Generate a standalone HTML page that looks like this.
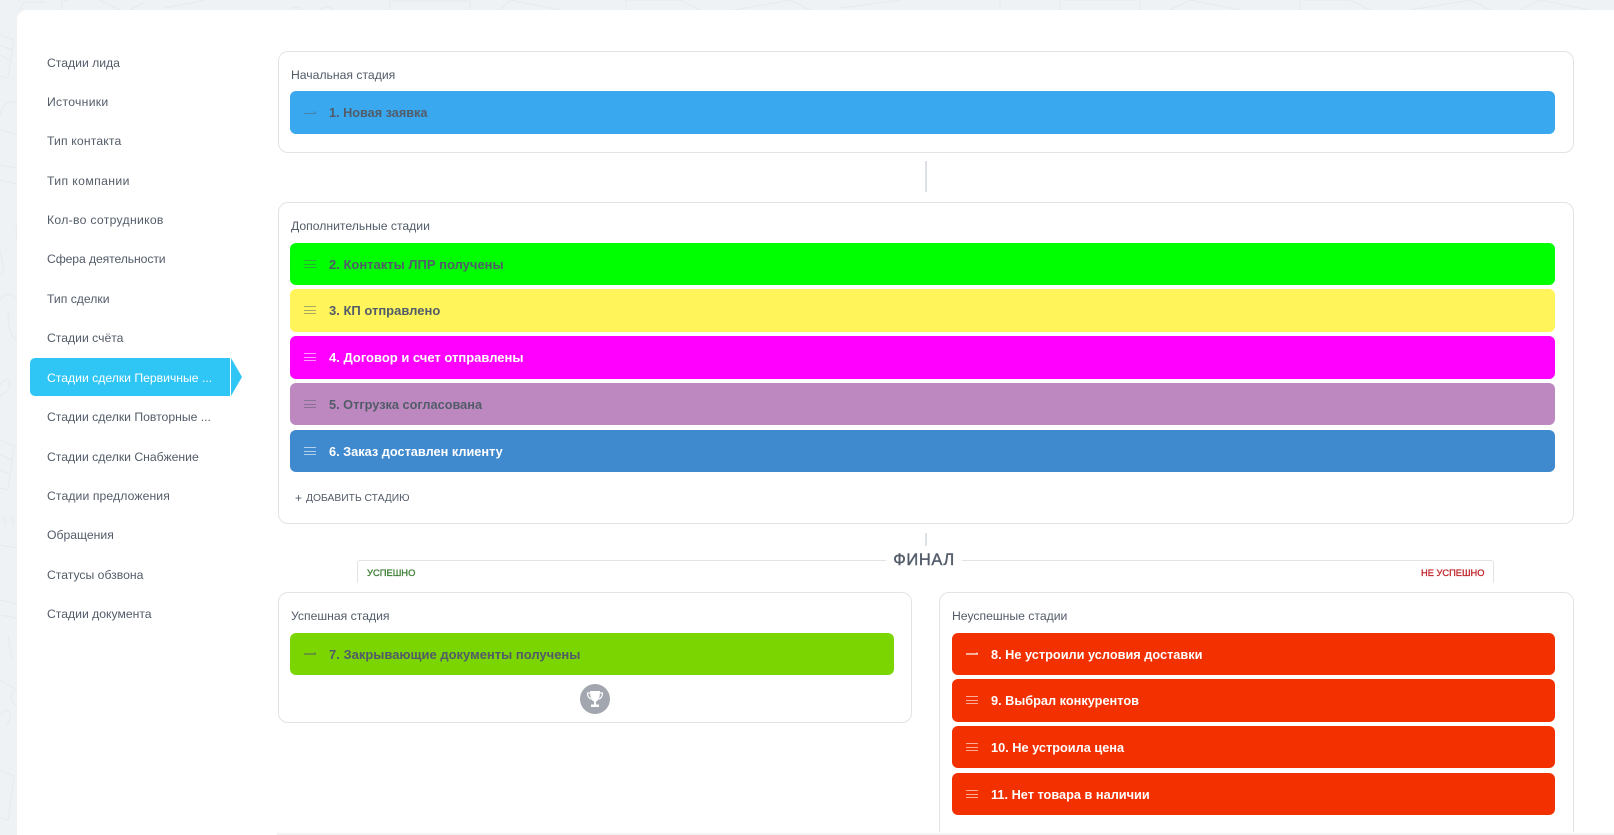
<!DOCTYPE html>
<html lang="ru">
<head>
<meta charset="utf-8">
<title>Стадии</title>
<style>
html,body{margin:0;padding:0;width:1614px;height:835px;overflow:hidden;background:#eef2f4;font-family:"Liberation Sans",sans-serif;color:#535c69}
#wrap{position:relative;width:1614px;height:835px;overflow:hidden;background:#eef2f4}
#bg{position:absolute;left:0;top:0}
#panel{position:absolute;left:17px;top:10px;width:1597px;height:825px;background:#fff;border-radius:10px 0 0 0}
.abs,.nav,.card,.st,.lbl,.conn{position:absolute}
.nav{left:47px;font-size:12.2px;line-height:16px;white-space:nowrap;color:#535c69}
.card{box-sizing:border-box;border:1px solid #e2e3e5;border-radius:10px;background:#fff}
.lbl{font-size:12.2px;line-height:16px;white-space:nowrap;color:#535c69}
.st{border-radius:6px;height:42px}
.st span{position:absolute;left:39px;top:0;line-height:43px;font-size:13px;font-weight:700;white-space:nowrap;color:#525c69}
.st.w span{color:#fff}
.st.r span{font-size:12.75px}
.st svg{position:absolute;left:14px;top:16px}
.conn{width:2px;background:#dde0e4;left:925px}
</style>
</head>
<body>
<div id="wrap">
<svg id="bg" width="1614" height="835" fill="none" stroke="#e6eaed" stroke-width="1">
<path d="M20 10L24 2H45M62 10V1L90 -4L120 10M130 10L145 2M165 8L205 0M290 10C292 6 300 6 302 10M320 10C322 6 330 6 333 10M390 10V1H470V10M500 10L510 0L560 10M626 10V0H680L700 10M735 10L790 0L810 10M840 8L900 0M1000 10V0M1060 10V0H1140V10M1170 10L1190 0L1240 10M1300 10V0H1350L1370 10M1410 10L1470 0L1490 10M1520 10L1540 0L1590 10"/>
<path d="M0 35L14 40L8 78L0 76M0 45L12 50M0 55L10 60M0 115C4 100 14 100 17 104M0 130L17 135M0 165L17 168M0 180L17 184M0 250L4 270L0 275M16 225L17 240M0 300C6 290 14 296 17 300M8 310C8 330 12 338 17 340M0 385C8 372 14 384 6 392L0 396M0 440L14 446L8 490L0 488M0 455L12 460M0 470L10 474M4 515L6 525M12 515L14 525M0 545L17 548M0 600L17 604M0 615L17 618M15 690C10 694 8 700 17 706M8 635L12 660M0 680L17 690M0 715C8 704 16 716 6 724M0 770L14 776L8 820L0 818"/>
</svg>
<div id="panel"></div>

<div class="nav" style="top:55px">Стадии лида</div>
<div class="nav" style="top:94px;letter-spacing:.3px">Источники</div>
<div class="nav" style="top:133px;letter-spacing:.15px">Тип контакта</div>
<div class="nav" style="top:173px;letter-spacing:.4px">Тип компании</div>
<div class="nav" style="top:212px;letter-spacing:.3px">Кол-во сотрудников</div>
<div class="nav" style="top:251px;letter-spacing:-.1px">Сфера деятельности</div>
<div class="nav" style="top:291px">Тип сделки</div>
<div class="nav" style="top:330px">Стадии счёта</div>
<div class="abs" style="left:30px;top:358px;width:200px;height:38px;background:#2fc6f6;border-radius:5px 0 0 5px"></div>
<svg class="abs" style="left:231px;top:358px" width="12" height="38"><path d="M0 0L11 19L0 38Z" fill="#2fc6f6"/></svg>
<div class="nav" style="top:370px;color:#fff">Стадии сделки Первичные ...</div>
<div class="nav" style="top:409px">Стадии сделки Повторные ...</div>
<div class="nav" style="top:449px">Стадии сделки Снабжение</div>
<div class="nav" style="top:488px;letter-spacing:.1px">Стадии предложения</div>
<div class="nav" style="top:527px">Обращения</div>
<div class="nav" style="top:567px">Статусы обзвона</div>
<div class="nav" style="top:606px">Стадии документа</div>

<div class="card" style="left:278px;top:51px;width:1296px;height:102px"></div>
<div class="lbl" style="left:291px;top:67px">Начальная стадия</div>
<div class="st" style="left:290px;top:91px;width:1265px;height:43px;background:#39a8ef">
<svg width="12" height="12" fill="none" stroke="#525c69" stroke-opacity=".5"><path d="M0 6.500H12M10 4.500L12 6.500"/></svg><span style="font-size:12.7px;line-height:44px">1. Новая заявка</span></div>

<div class="conn" style="top:161px;height:31px"></div>

<div class="card" style="left:278px;top:202px;width:1296px;height:322px"></div>
<div class="lbl" style="left:291px;top:218px">Дополнительные стадии</div>
<div class="st" style="left:290px;top:243px;width:1265px;background:#00ff00"><svg width="12" height="12" stroke="#525c69" stroke-opacity=".5"><path d="M0 1.500H12M0 5.500H12M0 8.500H12"/></svg><span>2. Контакты ЛПР получены</span></div>
<div class="st" style="left:290px;top:289px;width:1265px;height:43px;background:#fff55a"><svg width="12" height="12" stroke="#525c69" stroke-opacity=".5"><path d="M0 1.500H12M0 5.500H12M0 8.500H12"/></svg><span>3. КП отправлено</span></div>
<div class="st w" style="left:290px;top:336px;width:1265px;height:43px;background:#ff00ff"><svg width="12" height="12" stroke="#fff" stroke-opacity=".6"><path d="M0 1.500H12M0 5.500H12M0 8.500H12"/></svg><span>4. Договор и счет отправлены</span></div>
<div class="st r" style="left:290px;top:383px;width:1265px;background:#bd88bf"><svg width="12" height="12" stroke="#525c69" stroke-opacity=".5"><path d="M0 1.500H12M0 5.500H12M0 8.500H12"/></svg><span>5. Отгрузка согласована</span></div>
<div class="st w r" style="left:290px;top:430px;width:1265px;background:#3f89cf"><svg width="12" height="12" stroke="#fff" stroke-opacity=".6"><path d="M0 1.500H12M0 5.500H12M0 8.500H12"/></svg><span>6. Заказ доставлен клиенту</span></div>
<div class="abs" style="left:295px;top:491px;font-size:12px;line-height:14px;color:#535c69">+</div>
<div class="abs" style="left:306px;top:492px;font-size:10.3px;line-height:14px;white-space:nowrap;color:#535c69">ДОБАВИТЬ СТАДИЮ</div>

<div class="conn" style="top:533px;height:13px"></div>
<div class="abs" style="left:357px;top:560px;width:1137px;height:23px;box-sizing:border-box;border:1px solid #e2e3e5;border-bottom:0;border-radius:3px 3px 0 0"></div>
<div class="abs" style="left:886px;top:550px;width:76px;height:20px;background:#fff;text-align:center;font-size:16.5px;line-height:20px;letter-spacing:.6px;-webkit-text-stroke:.4px #535c69;color:#535c69">ФИНАЛ</div>
<div class="abs" style="left:367px;top:566px;font-size:9.4px;line-height:14px;-webkit-text-stroke:.3px #3c7f35;color:#3c7f35;white-space:nowrap">УСПЕШНО</div>
<div class="abs" style="left:1421px;top:566px;font-size:9.3px;line-height:14px;-webkit-text-stroke:.3px #c0262d;color:#c0262d;white-space:nowrap">НЕ УСПЕШНО</div>

<div class="card" style="left:278px;top:592px;width:634px;height:131px"></div>
<div class="lbl" style="left:291px;top:608px">Успешная стадия</div>
<div class="st" style="left:290px;top:633px;width:604px;background:#7bd500"><svg width="12" height="12" fill="none" stroke="#525c69" stroke-opacity=".5"><path d="M0 5H12" stroke-width="2"/><path d="M10 3.500L12 5"/></svg><span>7. Закрывающие документы получены</span></div>
<svg class="abs" style="left:580px;top:684px" width="30" height="30"><circle cx="15" cy="15" r="15" fill="#a2a6af"/><path d="M10 7H20C20 13 19 16.500 16 17.500V20.500H19V23H11V20.500H14V17.500C11 16.500 10 13 10 7Z" fill="#fff"/><path d="M10 9H7.500C7.500 12 9 14.500 11 15M20 9H22.500C22.500 12 21 14.500 19 15" fill="none" stroke="#fff" stroke-width="1.200"/></svg>

<div class="abs" style="left:939px;top:592px;width:635px;height:260px;box-sizing:border-box;border:1px solid #e2e3e5;border-radius:10px;background:#fff"></div>
<div class="lbl" style="left:952px;top:608px">Неуспешные стадии</div>
<div class="st w r" style="left:952px;top:633px;width:603px;background:#f23000"><svg width="12" height="12" fill="none" stroke="#fff" stroke-opacity=".6"><path d="M0 5H12" stroke-width="2"/><path d="M10 3.500L12 5"/></svg><span>8. Не устроили условия доставки</span></div>
<div class="st w r" style="left:952px;top:679px;width:603px;height:43px;background:#f23000"><svg width="12" height="12" stroke="#fff" stroke-opacity=".6"><path d="M0 1.500H12M0 5.500H12M0 8.500H12"/></svg><span>9. Выбрал конкурентов</span></div>
<div class="st w r" style="left:952px;top:726px;width:603px;background:#f23000"><svg width="12" height="12" stroke="#fff" stroke-opacity=".6"><path d="M0 1.500H12M0 5.500H12M0 8.500H12"/></svg><span>10. Не устроила цена</span></div>
<div class="st w r" style="left:952px;top:773px;width:603px;background:#f23000"><svg width="12" height="12" stroke="#fff" stroke-opacity=".6"><path d="M0 1.500H12M0 5.500H12M0 8.500H12"/></svg><span>11. Нет товара в наличии</span></div>

<div class="abs" style="left:277px;top:832px;width:1337px;height:3px;background:linear-gradient(#fff,#eeeeee)"></div>
</div>
</body>
</html>
